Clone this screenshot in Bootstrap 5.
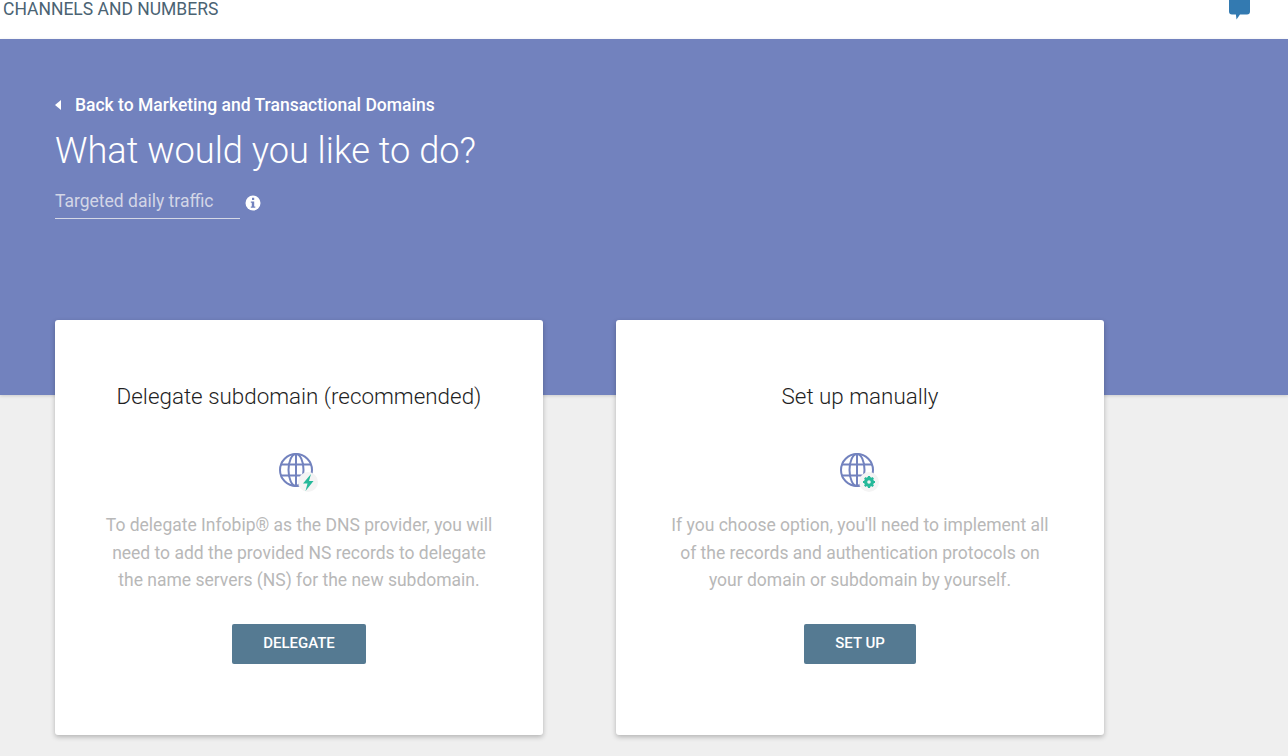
<!DOCTYPE html>
<html lang="en">
<head>
    <meta charset="UTF-8">
    <meta name="viewport" content="width=device-width, initial-scale=1.0">
    <title>Channels and Numbers</title>
    <link rel="stylesheet" href="https://cdn.jsdelivr.net/npm/bootstrap@5.3.0/dist/css/bootstrap.min.css">
    <style>
        html, body {
            height: 756px;
            overflow: hidden;
        }
        body {
            background-color: #efefef;
            font-family: Roboto, "Liberation Sans", sans-serif;
        }
        .top-bar {
            height: 39px;
            padding-left: 3px;
            background: #fff;
            overflow: hidden;
        }
        .top-title {
            font-size: 17.5px;
            line-height: 18px;
            color: #4b6373;
        }
        .chat-icon {
            width: 22px;
            height: 21px;
            margin-right: 37px;
        }
        .hero {
            height: 356px;
            padding: 54px 55px 0;
            background: #7282be;
            color: #fff;
            box-shadow: 0 1px 3px rgba(0, 0, 0, .15);
        }
        .back-link {
            height: 24px;
            font-size: 17.5px;
            font-weight: 500;
            color: #fff;
            text-decoration: none;
        }
        .hero-title {
            margin: 9px 0 0;
            font-size: 36.2px;
            font-weight: 300;
            line-height: 50px;
        }
        .traffic-field {
            width: 185px;
            height: 36px;
            margin-top: 7px;
            font-size: 17.5px;
            line-height: 36px;
            color: #d3d6e6;
            border-bottom: 1px solid #d5d8e6;
        }
        .info-icon {
            margin: 19px 0 0 5px;
        }
        .cards-row {
            position: relative;
            gap: 73px;
            margin: -75px 0 0 55px;
        }
        .option-card {
            width: 488px;
            height: 415px;
            padding-top: 60px;
            border: 0;
            border-radius: 3px;
            box-shadow: 0 2px 5px rgba(0, 0, 0, .25);
        }
        .option-title {
            margin: 0;
            font-size: 22.4px;
            font-weight: 300;
            line-height: 32px;
            color: #1f1f1f;
        }
        .option-icon {
            width: 40px;
            height: 40px;
            margin: 41px 0 19px;
        }
        .option-text {
            width: 392px;
            margin: 0 0 29px;
            font-size: 17.5px;
            line-height: 27.5px;
            color: #b8b8b8;
        }
        .action-btn {
            height: 40px;
            padding: 0 0 2px;
            font-size: 15px;
            font-weight: 500;
            line-height: 36px;
            color: #fff;
            background: #557a92;
            border: 0;
            border-radius: 2px;
        }
        .delegate-btn { width: 134px; }
        .setup-btn { width: 112px; }
    </style>
</head>
<body>
    <header class="top-bar d-flex justify-content-between">
        <span class="top-title">CHANNELS AND NUMBERS</span>
        <svg class="chat-icon" viewBox="0 0 22 21" aria-hidden="true">
            <path d="M0 0h21v11.500a3 3 0 0 1-3 3h-7l-3.500 5-.6-5H3a3 3 0 0 1-3-3z" fill="#337ab1"/>
        </svg>
    </header>

    <section class="hero">
        <a href="#" class="back-link d-flex align-items-center">
            <svg width="20" height="10" viewBox="0 0 20 10" aria-hidden="true">
                <path d="M6 0v10L0 5z" fill="#fff"/>
            </svg>
            Back to Marketing and Transactional Domains
        </a>
        <h1 class="hero-title">What would you like to do?</h1>
        <div class="d-flex">
            <div class="traffic-field">Targeted daily traffic</div>
            <svg class="info-icon" width="16" height="16" viewBox="0 0 16 16" aria-hidden="true">
                <circle cx="8" cy="8" r="7.500" fill="#fff"/>
                <path d="M7 2.800h2.200v2.100H7zM5.800 6.400h3.400v5h1.100v1.400H5.800v-1.400h1V7.800h-1z" fill="#7282be"/>
            </svg>
        </div>
    </section>

    <main class="cards-row d-flex">
        <div class="card option-card align-items-center text-center">
            <h2 class="option-title">Delegate subdomain (recommended)</h2>
            <svg class="option-icon" viewBox="0 0 40 40" aria-hidden="true">
                <g fill="none" stroke="#7282be" stroke-width="2">
                    <circle cx="17" cy="17" r="16"/>
                    <ellipse cx="17" cy="17" rx="7.500" ry="16"/>
                    <path d="M17 1v32M2 11.500h30M2 22.500h30"/>
                </g>
                <circle cx="29" cy="29" r="10" fill="#f4f4f4"/>
                <path d="M32 21l-8 9.500h4.500l-2 7.500 8-10h-4.500z" fill="#26b99a"/>
            </svg>
            <p class="option-text">To delegate Infobip® as the DNS provider, you will need to add the provided NS records to delegate the name servers (NS) for the new subdomain.</p>
            <button type="button" class="btn action-btn delegate-btn">DELEGATE</button>
        </div>
        <div class="card option-card align-items-center text-center">
            <h2 class="option-title">Set up manually</h2>
            <svg class="option-icon" viewBox="0 0 40 40" aria-hidden="true">
                <g fill="none" stroke="#7282be" stroke-width="2">
                    <circle cx="17" cy="17" r="16"/>
                    <ellipse cx="17" cy="17" rx="7.500" ry="16"/>
                    <path d="M17 1v32M2 11.500h30M2 22.500h30"/>
                </g>
                <circle cx="29" cy="29" r="10" fill="#f4f4f4"/>
                <circle cx="29" cy="29" r="3.500" fill="none" stroke="#26b99a" stroke-width="3"/>
                <path d="M29 23v12M23 29h12M24.800 24.800l8.400 8.400M33.200 24.800l-8.400 8.400" stroke="#26b99a" stroke-width="2.200"/>
                <circle cx="29" cy="29" r="1.800" fill="#f4f4f4"/>
            </svg>
            <p class="option-text">If you choose option, you'll need to implement all of the records and authentication protocols on your domain or subdomain by yourself.</p>
            <button type="button" class="btn action-btn setup-btn">SET UP</button>
        </div>
    </main>

    <script src="https://cdn.jsdelivr.net/npm/bootstrap@5.3.0/dist/js/bootstrap.bundle.min.js"></script>
</body>
</html>
